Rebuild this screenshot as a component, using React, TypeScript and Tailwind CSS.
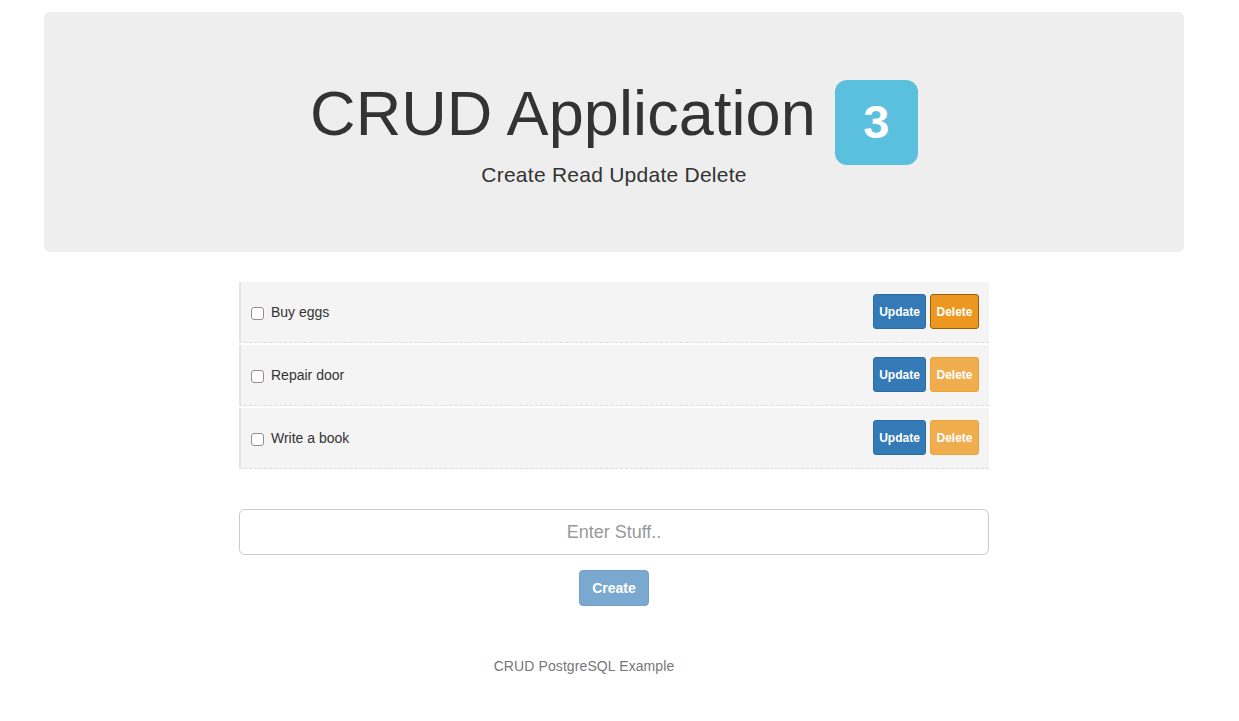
const todos = ["Buy eggs", "Repair door", "Write a book"];

function TodoRow({ text, active }: { text: string; active: boolean }) {
  return (
    <div className="flex h-[61px] items-start justify-between border-b border-l-2 border-dashed border-b-[#dcdcdc] border-l-[#e4e4e4] bg-[#f4f4f4] pl-[10px] pr-[10px] mb-[2px]" style={{ borderLeftStyle: "solid" }}>
      <label className="mt-[20px] flex items-center gap-[7px] text-[14px] text-[#333]">
        <span className="mt-[2px] inline-block h-[13px] w-[13px] rounded-[3px] border border-[#8f8f8f] bg-white" />
        {text}
      </label>
      <div className="mt-[12px] flex gap-[4px]">
        <button className="h-[35px] w-[53px] rounded-[3px] border border-[#2e6da4] bg-[#337ab7] text-[12px] font-bold text-white">
          Update
        </button>
        <button
          className={
            active
              ? "h-[35px] w-[49px] rounded-[3px] border border-[#985f0d] bg-[#ec971f] text-[12px] font-bold text-white"
              : "h-[35px] w-[49px] rounded-[3px] border border-[#eea236] bg-[#f0ad4e] text-[12px] font-bold text-white"
          }
        >
          Delete
        </button>
      </div>
    </div>
  );
}

export default function App() {
  return (
    <div className="min-h-[721px] bg-white pt-[12px] font-['Liberation_Sans',Arial,sans-serif] text-[#333]">
      <div className="ml-[44px] w-[1140px]">
        <div className="h-[240px] rounded-[6px] bg-[#eeeeee] pt-[67px]">
          <div className="flex items-start justify-center">
            <h1 className="text-[63px] leading-[69px] tracking-[0.1px] text-[#333]">CRUD Application</h1>
            <span className="ml-[19px] mt-[1px] flex h-[85px] w-[83px] items-center justify-center rounded-[12px] bg-[#5bc0de] text-[47px] font-bold text-white">
              3
            </span>
          </div>
          <p className="-mt-[5px] text-center text-[21px] leading-[29px] tracking-[0.25px]">Create Read Update Delete</p>
        </div>

        <div className="mx-auto mt-[30px] w-[750px]">
          {todos.map((t, i) => (
            <TodoRow key={t} text={t} active={i === 0} />
          ))}

          <input
            placeholder="Enter Stuff.."
            className="mt-[40px] block h-[46px] w-full rounded-[6px] border border-[#cccccc] bg-white px-4 text-center text-[18px] text-[#555] placeholder:text-[#999] outline-none"
          />
          <div className="mt-[15px] flex justify-center">
            <button className="h-[36px] w-[70px] rounded-[4px] border border-[#2e6da4] bg-[#337ab7] text-[14px] font-bold text-white opacity-65">
              Create
            </button>
          </div>
          <p className="mt-[50px] pr-[60px] text-center text-[14px] tracking-[0.1px] text-[#777]">CRUD PostgreSQL Example</p>
        </div>
      </div>
    </div>
  );
}
